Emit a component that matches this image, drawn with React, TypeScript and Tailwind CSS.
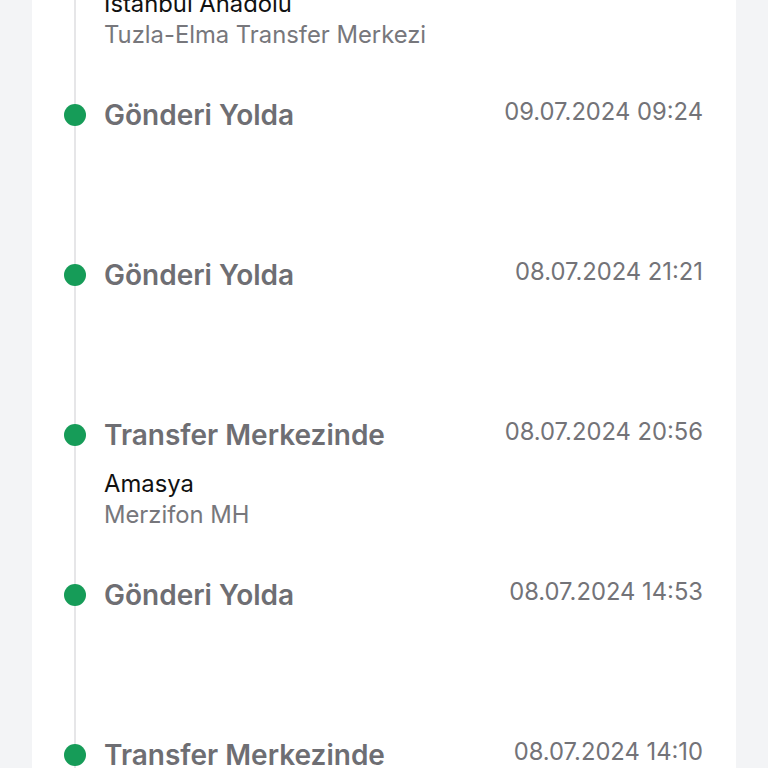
import React from "react";

type Item = {
  title: string;
  date: string;
  city?: string;
  place?: string;
};

const items: Item[] = [
  {
    title: "Transfer Merkezinde",
    date: "09.07.2024 04:12",
    city: "İstanbul Anadolu",
    place: "Tuzla-Elma Transfer Merkezi",
  },
  { title: "Gönderi Yolda", date: "09.07.2024 09:24" },
  { title: "Gönderi Yolda", date: "08.07.2024 21:21" },
  {
    title: "Transfer Merkezinde",
    date: "08.07.2024 20:56",
    city: "Amasya",
    place: "Merzifon MH",
  },
  { title: "Gönderi Yolda", date: "08.07.2024 14:53" },
  { title: "Transfer Merkezinde", date: "08.07.2024 14:10", city: "Amasya", place: "Merzifon MH" },
];

export default function App() {
  return (
    <div
      className="h-[768px] overflow-hidden bg-[#f3f4f6] px-8"
      style={{ fontFamily: "Inter, 'Noto Sans', sans-serif" }}
    >
      <div className="bg-white pl-[42px] pr-[33px]">
        <div className="mt-[-63px] border-l-2 border-[#e6e6e8]">
          {items.map((it, i) => (
            <div key={i} className="relative h-[160px] pl-[28px]">
              <span className="absolute left-[-12px] top-[7px] h-[22px] w-[22px] rounded-full bg-[#169c58]" />
              <div className="flex items-start justify-between">
                <div className="text-[28px] font-semibold leading-[36px] text-[#6e6e73]">
                  {it.title}
                </div>
                <div className="pt-[1px] text-[23.75px] leading-[28px] text-[#737378]">
                  {it.date}
                </div>
              </div>
              {it.city && (
                <div className="mt-[15px] text-[23.8px] leading-[31px]">
                  <div className="text-[#111111]">{it.city}</div>
                  <div className="text-[#77777c]">{it.place}</div>
                </div>
              )}
            </div>
          ))}
        </div>
      </div>
    </div>
  );
}
